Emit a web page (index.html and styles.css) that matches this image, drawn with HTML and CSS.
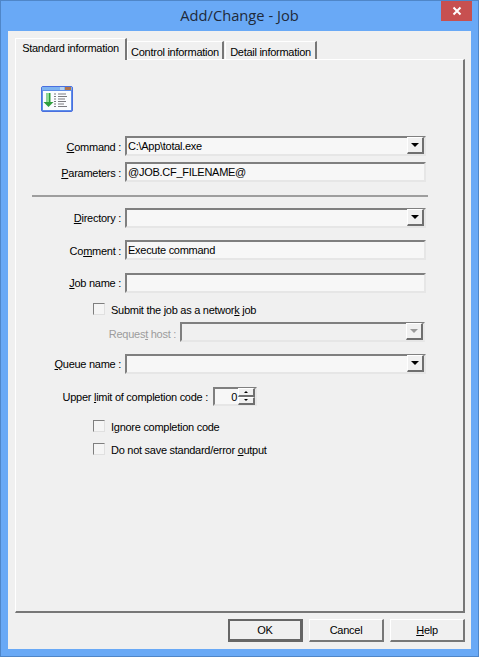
FILE: index.html
```html
<!DOCTYPE html>
<html lang="en">
<head>
<meta charset="utf-8">
<title>Add/Change - Job</title>
<link rel="stylesheet" href="styles.css">
</head>
<body>
<div class="window">
  <header class="titlebar">
    <span class="title">Add/Change - Job</span>
    <button class="close" aria-label="Close">
      <svg width="10" height="10" viewBox="0 0 10 10"><path d="M1.5 1.5 8.5 8.5M8.5 1.5 1.5 8.5" stroke="#fff" stroke-width="2" fill="none"/></svg>
    </button>
  </header>
  <div class="client">
    <nav class="tabs">
      <div class="tab active">Standard information</div>
      <div class="tab control">Control information</div>
      <div class="tab detail">Detail information</div>
    </nav>
    <main class="panel">
      <svg class="job-icon" width="32" height="26" viewBox="0 0 32 26">
        <rect x="0.5" y="0.5" width="31" height="25" rx="1.5" fill="#5f8fe8" stroke="#4a6fe0"/>
        <rect x="1" y="1" width="30" height="3" fill="#7fb4f0"/>
        <rect x="19" y="1" width="4" height="3" fill="#b9d2ee"/>
        <rect x="24" y="1" width="6" height="3" fill="#b0744c"/>
        <rect x="2" y="5" width="28" height="19" fill="#fafcff"/>
        <path d="M5.5 7h4v9h3l-5 5-5-5h3z" fill="#2f9e3f"/>
        <path d="M6 7h2v9H6z" fill="#8fdc93"/>
        <path d="M13 8h2M17 8h8M13 10.500h2M17 10.500h9M13 13h2M17 13h7M13 15.500h2M17 15.500h8M13 18h2M17 18h6M13 20.500h2M17 20.500h9" stroke="#7a7a80" stroke-width="1" fill="none"/>
      </svg>

      <div class="row row-command">
        <label class="label"><u>C</u>ommand :</label>
        <div class="field select"><span class="value">C:\App\total.exe</span><span class="drop"><i class="arrow"></i></span></div>
      </div>
      <div class="row row-params">
        <label class="label"><u>P</u>arameters :</label>
        <div class="field"><span class="value">@JOB.CF_FILENAME@</span></div>
      </div>

      <hr class="separator">

      <div class="row row-dir">
        <label class="label raised"><u>D</u>irectory :</label>
        <div class="field select"><span class="value"></span><span class="drop"><i class="arrow"></i></span></div>
      </div>
      <div class="row row-comment">
        <label class="label">Co<u>m</u>ment :</label>
        <div class="field"><span class="value">Execute command</span></div>
      </div>
      <div class="row row-job">
        <label class="label raised"><u>J</u>ob name :</label>
        <div class="field"><span class="value"></span></div>
      </div>

      <div class="check row-network"><span class="box"></span><span class="check-text">Submit the job as a networ<u>k</u> job</span></div>

      <div class="row row-host">
        <label class="label host-label">Reques<u>t</u> host :</label>
        <div class="field select host"><span class="value"></span><span class="drop"><i class="arrow"></i></span></div>
      </div>
      <div class="row row-queue">
        <label class="label raised"><u>Q</u>ueue name :</label>
        <div class="field select"><span class="value"></span><span class="drop"><i class="arrow"></i></span></div>
      </div>
      <div class="row row-limit">
        <label class="label raised limit-label">Upper <u>l</u>imit of completion code :</label>
        <div class="field spin"><span class="value">0</span>
          <span class="spinner">
            <span class="spin-btn"><i class="mini up"></i></span>
            <span class="spin-btn"><i class="mini down"></i></span>
          </span>
        </div>
      </div>

      <div class="check row-ignore"><span class="box"></span><span class="check-text">I<u>g</u>nore completion code</span></div>
      <div class="check row-save"><span class="box"></span><span class="check-text">Do not save standard/error <u>o</u>utput</span></div>
    </main>
    <footer class="buttons">
      <button class="btn default">OK</button>
      <button class="btn">Cancel</button>
      <button class="btn"><u>H</u>elp</button>
    </footer>
  </div>
</div>
</body>
</html>
```
FILE: styles.css
```css
* { box-sizing: border-box; }
html, body { margin: 0; padding: 0; }
body { font-family: "Liberation Sans", Arial, sans-serif; font-size: 11px; letter-spacing: -0.27px; color: #000; }

.window {
  width: 479px;
  height: 657px;
  background: #69a9f6;
  border: 1px solid #4f86c8;
  display: flex;
  flex-direction: column;
  padding: 0 7px 7px;
  overflow: hidden;
}

.titlebar {
  height: 30px;
  flex: none;
  display: flex;
  justify-content: center;
  align-items: center;
  position: relative;
  padding-bottom: 2px;
}
.title { font-family: "Open Sans", sans-serif; font-size: 14.7px; letter-spacing: 0; color: #1f2a3a; }
.close {
  position: absolute;
  top: 0;
  right: -1px;
  width: 31px;
  height: 20px;
  border: 0;
  padding: 0;
  background: #c75050;
  display: flex;
  align-items: center;
  justify-content: center;
}

.client {
  flex: 1;
  background: #f0f0f0;
  display: flex;
  flex-direction: column;
  padding: 7px 6px 7px 7px;
  min-height: 0;
}

.tabs { display: flex; align-items: flex-end; height: 21px; flex: none; position: relative; z-index: 1; }
.tab {
  height: 18px;
  background: #f0f0f0;
  border-top: 1px solid #fff;
  border-left: 1px solid #fff;
  border-right: 2px solid #777;
  display: flex;
  align-items: center;
  justify-content: center;
  white-space: nowrap;
  padding-top: 2px;
}
.tab.active { width: 112px; padding-top: 0; padding-bottom: 4px; margin-bottom: -1px; height: 22px; }
.tab.control { width: 97px; margin-left: 0; }
.tab.detail { width: 92px; margin-left: 1px; }

.panel {
  flex: 1;
  min-height: 0;
  background: #f0f0f0;
  border-top: 1px solid #fff;
  border-left: 1px solid #fff;
  border-right: 2px solid #777;
  border-bottom: 2px solid #777;
  display: flex;
  flex-direction: column;
  align-items: flex-start;
}

.job-icon { margin: 26px 0 0 25px; flex: none; display: block; }

.row { display: flex; align-items: center; height: 20px; flex: none; }
.label { width: 106px; text-align: right; white-space: nowrap; padding-right: 1px; padding-top: 2px; }
.label.raised { padding-top: 0; }
.field {
  width: 301px;
  height: 20px;
  margin-left: 3px;
  background: #f7f7f7;
  border-top: 2px solid #7f7f7f;
  border-left: 2px solid #7f7f7f;
  border-right: 2px solid #e6e6e6;
  border-bottom: 2px solid #e6e6e6;
  display: flex;
  align-items: center;
  justify-content: space-between;
}
.value { padding-left: 1px; white-space: nowrap; }
.drop {
  width: 17px;
  height: 17px;
  background: #f0f0f0;
  border-top: 1px solid #fff;
  border-left: 1px solid #fff;
  border-right: 2px solid #6f6f6f;
  border-bottom: 2px solid #6f6f6f;
  display: flex;
  align-items: center;
  justify-content: center;
  margin-top: -1px;
}
.arrow {
  width: 0;
  height: 0;
  border-left: 4px solid transparent;
  border-right: 4px solid transparent;
  border-top: 4px solid #000;
}

.row-command { margin-top: 24px; }
.row-params { margin-top: 6px; }
.separator {
  width: 396px;
  height: 2px;
  margin: 13px 0 0 16px;
  border: 0;
  background: #9e9e9e;
  flex: none;
}
.row-dir { margin-top: 11px; }
.row-comment { margin-top: 12px; }
.row-job { margin-top: 13px; }

.check { display: flex; align-items: center; height: 16px; flex: none; margin-left: 77px; gap: 6px; white-space: nowrap; }
.check-text { padding-top: 2px; }
.box {
  width: 12px;
  height: 12px;
  background: #f5f5f5;
  border-top: 1px solid #7f7f7f;
  border-left: 1px solid #7f7f7f;
  border-right: 1px solid #e0e0e0;
  border-bottom: 1px solid #e0e0e0;
  flex: none;
}
.row-network { margin-top: 8px; }
.row-host { margin-top: 5px; }
.host-label { width: 161px; color: #9c9c9c; padding-right: 1px; padding-top: 4px; }
.field.host { width: 245px; background: #f0f0f0; margin-left: 3px; border-right-color: #e9e9e9; }
.host .arrow { border-top-color: #999; }
.row-queue { margin-top: 12px; }
.row-limit { margin-top: 13px; height: 19px; }
.limit-label { width: 193px; padding-right: 1px; }
.field.spin { width: 44px; height: 19px; margin-left: 4px; }
.spin .value { flex: 1; text-align: right; padding-right: 1px; }
.spinner { width: 17px; height: 17px; display: flex; flex-direction: column; flex: none; }
.spin-btn {
  flex: 1;
  background: #f0f0f0;
  border-top: 1px solid #fff;
  border-left: 1px solid #fff;
  border-right: 2px solid #6f6f6f;
  border-bottom: 2px solid #6f6f6f;
  display: flex;
  align-items: center;
  justify-content: center;
}
.mini { width: 0; height: 0; border-left: 2px solid transparent; border-right: 2px solid transparent; }
.mini.up { border-bottom: 2px solid #000; }
.mini.down { border-top: 2px solid #000; }
.row-ignore { margin-top: 12px; }
.row-save { margin-top: 7px; }

.buttons { display: flex; justify-content: flex-end; gap: 6px; flex: none; margin-top: 6px; height: 23px; }
.btn {
  width: 75px;
  height: 23px;
  font: inherit;
  letter-spacing: -0.27px;
  color: #000;
  background: #f0f0f0;
  border-top: 1px solid #fff;
  border-left: 1px solid #fff;
  border-right: 2px solid #777;
  border-bottom: 2px solid #777;
  padding: 0;
}
.btn.default { border: 2px solid #666; border-bottom-width: 3px; border-right-width: 3px; }
```
